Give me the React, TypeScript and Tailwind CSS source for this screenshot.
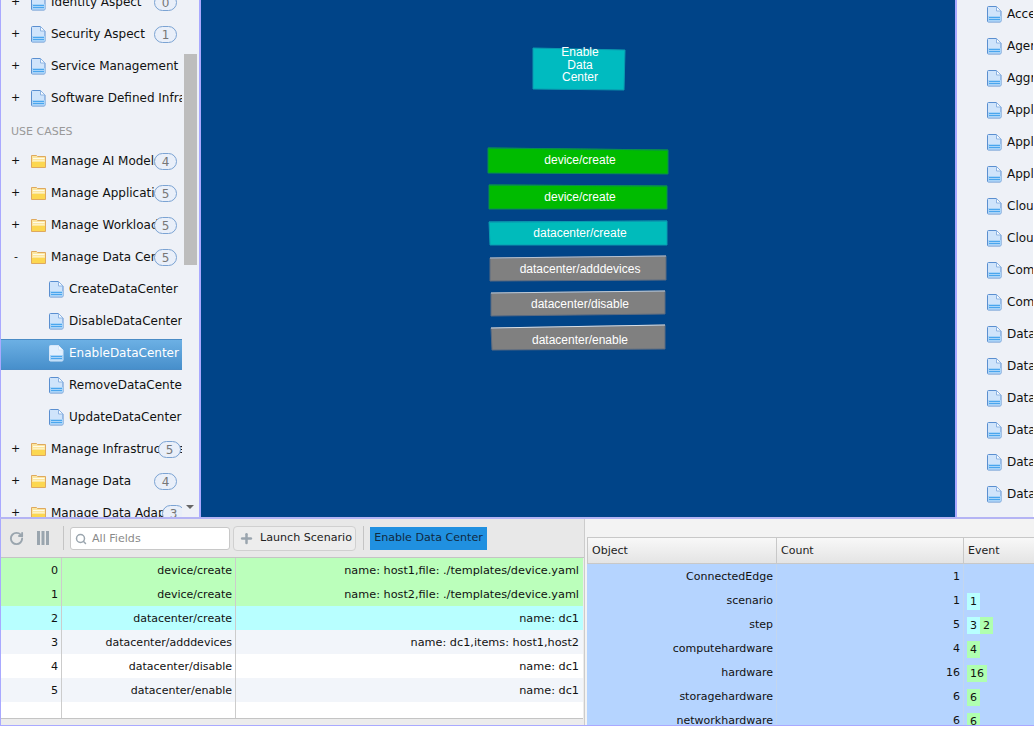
import React from "react";
import { Plus, RotateCw, Search } from "lucide-react";

interface TreeRow {
  label: string;
  kind: "doc" | "folder";
  toggle?: string;
  badge?: number;
  badgeLeft?: string;
  child?: boolean;
  selected?: boolean;
}

const aspects: TreeRow[] = [
  { label: "Identity Aspect", kind: "doc", toggle: "+", badge: 0 },
  { label: "Security Aspect", kind: "doc", toggle: "+", badge: 1 },
  { label: "Service Management", kind: "doc", toggle: "+" },
  { label: "Software Defined Infrastructure", kind: "doc", toggle: "+" },
];

const useCases: TreeRow[] = [
  { label: "Manage AI Models", kind: "folder", toggle: "+", badge: 4 },
  { label: "Manage Applications", kind: "folder", toggle: "+", badge: 5 },
  { label: "Manage Workloads", kind: "folder", toggle: "+", badge: 5 },
  { label: "Manage Data Center", kind: "folder", toggle: "-", badge: 5 },
  { label: "CreateDataCenter", kind: "doc", child: true },
  { label: "DisableDataCenter", kind: "doc", child: true },
  { label: "EnableDataCenter", kind: "doc", child: true, selected: true },
  { label: "RemoveDataCenter", kind: "doc", child: true },
  { label: "UpdateDataCenter", kind: "doc", child: true },
  { label: "Manage Infrastructure", kind: "folder", toggle: "+", badge: 5, badgeLeft: "left-[157px]" },
  { label: "Manage Data", kind: "folder", toggle: "+", badge: 4 },
  { label: "Manage Data Adapters", kind: "folder", toggle: "+", badge: 3, badgeLeft: "left-[161px]" },
];

const rightItems = [
  "Access", "Agent", "Aggregate", "Application", "Application", "Application",
  "Cloud", "Cloud", "Compute", "Compute", "Data", "Data", "Data", "Data", "Data", "Data",
];

const steps = [
  ["0", "device/create", "name: host1,file: ./templates/device.yaml", "bg-[#bbffbb]"],
  ["1", "device/create", "name: host2,file: ./templates/device.yaml", "bg-[#bbffbb]"],
  ["2", "datacenter/create", "name: dc1", "bg-[#b8ffff]"],
  ["3", "datacenter/adddevices", "name: dc1,items: host1,host2", "bg-[#f2f5fa]"],
  ["4", "datacenter/disable", "name: dc1", "bg-white"],
  ["5", "datacenter/enable", "name: dc1", "bg-[#f2f5fa]"],
];

const stats: { object: string; count: number; events: [string, string][] }[] = [
  { object: "ConnectedEdge", count: 1, events: [] },
  { object: "scenario", count: 1, events: [["1", "bg-[#b8ffff]"]] },
  { object: "step", count: 5, events: [["3", "bg-[#b8ffff]"], ["2", "bg-[#b0ffb0]"]] },
  { object: "computehardware", count: 4, events: [["4", "bg-[#b0ffb0]"]] },
  { object: "hardware", count: 16, events: [["16", "bg-[#b0ffb0]"]] },
  { object: "storagehardware", count: 6, events: [["6", "bg-[#b0ffb0]"]] },
  { object: "networkhardware", count: 6, events: [["6", "bg-[#b0ffb0]"]] },
];

const nodes = [
  { points: "287,148 467,150 467,174 287,173", fill: "#00bb00", edge: "#0a8f50", top: "#0a8f50", y: 164, label: "device/create" },
  { points: "288,185 466,186 466,209 288,209", fill: "#00bb00", edge: "#0a8f50", top: "#0a8f50", y: 201, label: "device/create" },
  { points: "288,222 466,221 466,245 289,245", fill: "#00bbbb", edge: "#0a9ab0", top: "#0a9ab0", y: 237, label: "datacenter/create" },
  { points: "289,258 465,256 465,280 289,281", fill: "#808080", edge: "#5a6a80", top: "#b8c4d4", y: 273, label: "datacenter/adddevices" },
  { points: "290,293 464,291 464,314 290,316", fill: "#808080", edge: "#5a6a80", top: "#c4d0dc", y: 308, label: "datacenter/disable" },
  { points: "290,328 464,325 464,349 291,350", fill: "#808080", edge: "#5a6a80", top: "#d8e0e8", y: 344, label: "datacenter/enable" },
];

function DocIcon({ light }: { light?: boolean }) {
  return (
    <svg width="15" height="17" viewBox="0 0 15 17" className="shrink-0">
      <path d="M.5 1.500a1 1 0 0 1 1-1h8l4.500 4.500v10a1 1 0 0 1-1 1h-11.500a1 1 0 0 1-1-1z" fill={light ? "#e2f0fe" : "#cfe4fb"} stroke={light ? "#d6e6f8" : "#5a8fd0"} />
      <path d="M9.500 .5v4.500h4.500z" fill="#f6fbff" stroke={light ? "#d6e6f8" : "#8db3e2"} />
      <rect x="1" y="10" width="13" height="5.500" fill="#a9d4f8" />
      <path d="M2 11.500h11" stroke="#4aa6ee" />
      <path d="M2 13.500h11" stroke="#4aa6ee" />
    </svg>
  );
}

function FolderIcon() {
  return (
    <svg width="15" height="14" viewBox="0 0 15 14" className="shrink-0">
      <path d="M.5 1.500h5l1 1h8v11h-14z" fill="#fbe6a0" stroke="#dfa95e" />
      <path d="M2 4.500h11.500" stroke="#fffbe8" />
      <path d="M2 6.500h11.500" stroke="#fff3c0" />
      <rect x="1" y="8" width="13" height="5" fill="#fcd750" />
    </svg>
  );
}

function Badge({ value, left }: { value: number; left?: string }) {
  return (
    <span className={`absolute top-[8px] ${left ?? "left-[153px]"} flex h-[17px] w-[23px] items-center justify-center rounded-full border border-[#7ba3d3] bg-[#e9eff9] text-[#777]`}>
      {value}
    </span>
  );
}

function Row({ row }: { row: TreeRow }) {
  return (
    <div className={`relative flex w-[181px] items-center overflow-hidden whitespace-nowrap ${row.selected ? "mb-[-1px] mt-[2px] h-[31px] border-y border-[#4a8cc6] bg-gradient-to-b from-[#6cb0e4] to-[#478fcb] pb-[3px] text-white" : "h-8 text-[#111]"}`}>
      <span className={`w-[30px] shrink-0 text-[11px] ${row.toggle === "-" ? "pl-[13px]" : "pl-[10px]"} ${row.child ? "invisible" : ""}`}>{row.toggle}</span>
      {row.child && <span className="w-[18px] shrink-0" />}
      <span className="flex w-5 shrink-0">{row.kind === "doc" ? <DocIcon light={row.selected} /> : <FolderIcon />}</span>
      <span>{row.label}</span>
      {row.badge !== undefined && <Badge value={row.badge} left={row.badgeLeft} />}
    </div>
  );
}

export default function App() {
  return (
    <div className="flex h-[729px] w-[1034px] flex-col overflow-hidden bg-white text-[12px] font-['DejaVu_Sans',sans-serif]">
      <div className="flex h-[517px] shrink-0">
        <aside className="relative w-[201px] shrink-0 overflow-hidden border-x border-[#a9a9ff] border-r-2 bg-[#eef1f7]">
          <div className="-mt-[14px]">
            {aspects.map((row) => (
              <Row key={row.label} row={row} />
            ))}
            <div className="flex h-[31px] items-center pt-[5px] pl-[10px] text-[11px] text-[#999]">USE CASES</div>
            {useCases.map((row) => (
              <Row key={row.label} row={row} />
            ))}
          </div>
          <div className="absolute left-[183px] top-[54px] h-[211px] w-[13px] bg-[#bdbdbd]" />
          <div className="absolute left-[185px] top-[505px] h-0 w-0 border-x-[4px] border-t-[4px] border-x-transparent border-t-[#666]" />
        </aside>

        <main className="min-w-0 flex-1 bg-[#004488]">
          <svg width="754" height="517" className="block font-['Liberation_Sans',sans-serif] text-[12px]">
            <polygon points="332,48 424,50 423,90 332,89" fill="#00bbc0" stroke="#0a9ab0" />
            <g fill="#fff" textAnchor="middle">
              <text x="379" y="56">Enable</text>
              <text x="379" y="69">Data</text>
              <text x="379" y="81">Center</text>
              {nodes.map((node) => {
                const [a, b] = node.points.split(" ");
                const [x1, y1] = a.split(",");
                const [x2, y2] = b.split(",");
                return (
                  <React.Fragment key={node.points}>
                    <polygon points={node.points} fill={node.fill} stroke={node.edge} />
                    <line x1={x1} y1={y1} x2={x2} y2={y2} stroke={node.top} />
                    <text x="379" y={node.y}>{node.label}</text>
                  </React.Fragment>
                );
              })}
            </g>
          </svg>
        </main>

        <aside className="w-[79px] shrink-0 overflow-hidden border-l-2 border-[#a9a9ff] bg-white">
          <div className="-mt-[3px] w-[76px] bg-[#eef1f7] pb-8">
            {rightItems.map((item, i) => (
              <div key={i} className="flex h-8 items-center overflow-hidden whitespace-nowrap pl-[30px] pt-[2px] text-[#111]">
                <span className="flex w-5 shrink-0"><DocIcon /></span>
                {item}
              </div>
            ))}
          </div>
        </aside>
      </div>

      <div className="flex h-[209px] shrink-0 border-b border-t-2 border-[#a9a9ff] border-t-[#b4b4f4] text-[11.1px]">
        <section className="flex w-[585px] shrink-0 flex-col border-x border-[#a9a9ff] border-r-[#ccc] bg-[#ececec]">
          <div className="flex h-[39px] shrink-0 items-center border-b border-[#c4c4c4] bg-[#e8e8e8] text-[#222]">
            <RotateCw size={15} strokeWidth={3} className="ml-2 shrink-0 text-[#9aa5ae]" />
            <svg width="14" height="14" viewBox="0 0 14 14" className="ml-[12px] shrink-0">
              <path d="M1 0h3v14h-3zM5.500 0h3v14h-3zM10 0h3v14h-3z" fill="#9aa5ae" />
            </svg>
            <span className="ml-[13px] h-6 w-px shrink-0 bg-[#c4c4c4]" />
            <label className="ml-[6px] flex h-[23px] w-[160px] shrink-0 items-center whitespace-nowrap rounded-[3px] border border-[#c8c8c8] bg-white pl-1 pt-[2px] text-[#8a8a8a]">
              <Search size={12} strokeWidth={3} className="mr-[5px] text-[#9aa5ae]" />
              All Fields
            </label>
            <button className="ml-[3px] flex h-[25px] w-[123px] shrink-0 items-center whitespace-nowrap rounded-[4px] border border-[#d0d0d0] bg-[#ededed] pl-[5px] pt-[1px]">
              <Plus size={15} strokeWidth={4} className="mr-[6px] text-[#9aa5ae]" />
              Launch Scenario
            </button>
            <span className="ml-[7px] h-6 w-px shrink-0 bg-[#c4c4c4]" />
            <button className="ml-[6px] flex h-[23px] w-[117px] shrink-0 items-center justify-center whitespace-nowrap bg-[#2090e0] pt-[1px] text-[#102a40]">
              Enable Data Center
            </button>
          </div>
          <div className="mr-[1px] flex h-[161px] shrink-0 flex-col border-b border-[#c4c4c4] bg-white text-[#111]">
            {steps.map(([index, name, params, bg]) => (
              <div key={index} className={`grid h-6 shrink-0 grid-cols-[61px_174px_1fr] text-right leading-[25px] ${bg}`}>
                <span className="border-r border-[#ccc] pr-[3px]">{index}</span>
                <span className="border-r border-[#ccc] pr-[3px] text-[11px]">{name}</span>
                <span className="pr-1 text-[11.25px]">{params}</span>
              </div>
            ))}
            <div className="grid flex-1 grid-cols-[61px_174px_1fr]">
              <span className="border-r border-[#ccc]" />
              <span className="border-r border-[#ccc]" />
            </div>
          </div>
        </section>

        <section className="min-w-0 flex-1 overflow-hidden bg-[#f3f3f3] pl-[2px] pt-[18px] text-[11px]">
          <div className="grid h-[27px] grid-cols-[190px_187px_1fr] border-y border-[#c8c8c8] bg-gradient-to-b from-[#f8f8f8] to-[#e4e4e4] text-[#222]">
            <span className="border-x border-[#c8c8c8] pl-1 leading-[26px]">Object</span>
            <span className="border-r border-[#c8c8c8] pl-1 leading-[26px]">Count</span>
            <span className="pl-1 leading-[26px]">Event</span>
          </div>
          <div className="h-[200px] bg-[#b5d4ff] text-[#111]">
            {stats.map((stat) => (
              <div key={stat.object} className="grid h-6 grid-cols-[190px_187px_1fr] leading-[25px]">
                <span className="border-r border-[#c3d6ee] pr-[3px] text-right">{stat.object}</span>
                <span className="border-r border-[#c3d6ee] pr-[3px] text-right">{stat.count}</span>
                <span className="flex h-6 items-center pl-[3px] pt-[3px]">
                  {stat.events.map(([value, bg]) => (
                    <span key={bg} className={`flex h-[17px] items-center px-[3px] ${bg}`}>{value}</span>
                  ))}
                </span>
              </div>
            ))}
          </div>
        </section>
      </div>
    </div>
  );
}
